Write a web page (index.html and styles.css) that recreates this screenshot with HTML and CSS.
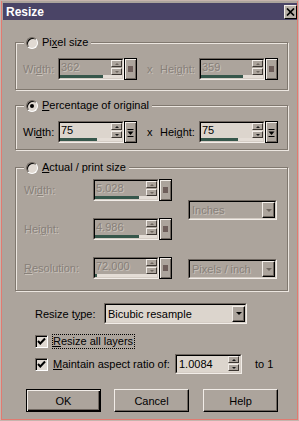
FILE: index.html
```html
<!DOCTYPE html>
<html lang="en">
<head>
    <meta charset="UTF-8">
    <title>Resize</title>
    <link rel="stylesheet" href="styles.css">
</head>
<body>
    <div class="window">
        <div class="titlebar">
            <span class="title">Resize</span>
            <span class="close">
                <svg width="9" height="8" viewBox="0 0 9 8"><path d="M1 0.5 L8 7.5 M8 0.5 L1 7.5" stroke="#000" stroke-width="1.7"/></svg>
            </span>
        </div>
        <div class="content">
            <div class="group g1">
                <div class="legend"><span class="radio"></span><span>Pi<u>x</u>el size</span></div>
                <div class="row">
                    <span class="lbl dis">Wi<u>d</u>th:</span>
                    <div class="combo dis">
                        <div class="edit"><div class="edit-in">
                            <div class="edit-top"><span class="val">362</span><span class="spin"><i class="up"></i><i class="down"></i></span></div>
                            <div class="bar"><div class="fill" style="width:69%"></div></div>
                        </div></div>
                        <span class="pick"><b class="sq"></b></span>
                    </div>
                    <span class="times dis">x</span>
                    <span class="lbl-h dis">Hei<u>g</u>ht:</span>
                    <div class="combo dis">
                        <div class="edit"><div class="edit-in">
                            <div class="edit-top"><span class="val">359</span><span class="spin"><i class="up"></i><i class="down"></i></span></div>
                            <div class="bar"><div class="fill" style="width:68%"></div></div>
                        </div></div>
                        <span class="pick"><b class="sq"></b></span>
                    </div>
                </div>
            </div>

            <div class="group g2">
                <div class="legend"><span class="radio on"></span><span><u>P</u>ercentage of original</span></div>
                <div class="row">
                    <span class="lbl">Wi<u>d</u>th:</span>
                    <div class="combo">
                        <div class="edit"><div class="edit-in">
                            <div class="edit-top"><span class="val">75</span><span class="spin"><i class="up"></i><i class="down"></i></span></div>
                            <div class="bar"><div class="fill" style="width:60%"></div></div>
                        </div></div>
                        <span class="pick">
                            <svg width="7" height="9" viewBox="0 0 7 9"><path d="M0.5 1.5 H6.5" stroke="#000"/><path d="M0.5 3.5 H6.5 L3.5 7 Z" fill="#000"/><path d="M0.5 8.5 H6.5" stroke="#000"/></svg>
                        </span>
                    </div>
                    <span class="times">x</span>
                    <span class="lbl-h">Hei<u>g</u>ht:</span>
                    <div class="combo">
                        <div class="edit"><div class="edit-in">
                            <div class="edit-top"><span class="val">75</span><span class="spin"><i class="up"></i><i class="down"></i></span></div>
                            <div class="bar"><div class="fill" style="width:60%"></div></div>
                        </div></div>
                        <span class="pick">
                            <svg width="7" height="9" viewBox="0 0 7 9"><path d="M0.5 1.5 H6.5" stroke="#000"/><path d="M0.5 3.5 H6.5 L3.5 7 Z" fill="#000"/><path d="M0.5 8.5 H6.5" stroke="#000"/></svg>
                        </span>
                    </div>
                </div>
            </div>

            <div class="group g3">
                <div class="legend"><span class="radio"></span><span><u>A</u>ctual / print size</span></div>
                <div class="print">
                    <div class="print-left">
                        <div class="row">
                            <span class="lbl-wide dis">Wi<u>d</u>th:</span>
                            <div class="combo dis">
                                <div class="edit"><div class="edit-in">
                                    <div class="edit-top"><span class="val">5.028</span><span class="spin"><i class="up"></i><i class="down"></i></span></div>
                                    <div class="bar"><div class="fill" style="width:71%"></div></div>
                                </div></div>
                                <span class="pick"><b class="sq"></b></span>
                            </div>
                        </div>
                        <div class="row">
                            <span class="lbl-wide dis">Hei<u>g</u>ht:</span>
                            <div class="combo dis">
                                <div class="edit"><div class="edit-in">
                                    <div class="edit-top"><span class="val">4.986</span><span class="spin"><i class="up"></i><i class="down"></i></span></div>
                                    <div class="bar"><div class="fill" style="width:71%"></div></div>
                                </div></div>
                                <span class="pick"><b class="sq"></b></span>
                            </div>
                        </div>
                        <div class="row">
                            <span class="lbl-wide dis"><u>R</u>esolution:</span>
                            <div class="combo dis">
                                <div class="edit"><div class="edit-in">
                                    <div class="edit-top"><span class="val">72.000</span><span class="spin"><i class="up"></i><i class="down"></i></span></div>
                                    <div class="bar"><div class="fill" style="width:3%"></div></div>
                                </div></div>
                                <span class="pick"><b class="sq"></b></span>
                            </div>
                        </div>
                    </div>
                    <div class="print-right">
                        <div class="drop drop-units dis"><div class="drop-in"><span class="drop-text">Inches</span><span class="drop-btn"><i class="tri"></i></span></div></div>
                        <div class="drop drop-units drop-res dis"><div class="drop-in"><span class="drop-text">Pixels / inch</span><span class="drop-btn"><i class="tri"></i></span></div></div>
                    </div>
                </div>
            </div>

            <div class="type-row">
                <span class="type-lbl">Resize t<u>y</u>pe:</span>
                <div class="drop drop-type"><div class="drop-in"><span class="drop-text">Bicubic resample</span><span class="drop-btn"><i class="tri"></i></span></div></div>
            </div>

            <div class="check-row">
                <span class="check"><svg width="11" height="11" viewBox="0 0 11 11"><path d="M2 5 L4.3 7.5 L9 2.5" fill="none" stroke="#000" stroke-width="2"/></svg></span>
                <span class="focus"><u>R</u>esize all layers</span>
            </div>

            <div class="check-row aspect-row">
                <span class="check"><svg width="11" height="11" viewBox="0 0 11 11"><path d="M2 5 L4.3 7.5 L9 2.5" fill="none" stroke="#000" stroke-width="2"/></svg></span>
                <span class="aspect-lbl"><u>M</u>aintain aspect ratio of:</span>
                <div class="edit edit-aspect"><div class="edit-in">
                    <div class="edit-top"><span class="val">1.0084</span><span class="spin"><i class="up"></i><i class="down"></i></span></div>
                </div></div>
                <span class="to-one">to 1</span>
            </div>

            <div class="buttons">
                <button class="btn default">OK</button>
                <button class="btn btn-cancel">Cancel</button>
                <button class="btn btn-help">Help</button>
            </div>
        </div>
    </div>
</body>
</html>
```

FILE: styles.css
```css
body {
    margin: 0;
    font-family: "Liberation Sans", Arial, sans-serif;
    font-size: 11px;
    color: #000000;
}
u {
    text-decoration-thickness: 1px;
    text-underline-offset: 1px;
}
.window {
    width: 299px;
    height: 421px;
    box-sizing: border-box;
    background: #aca49c;
    border: 1px solid #c6b4ad;
    box-shadow: inset 1px 0 0 #e27a70, inset -1px 0 0 #e27a70, inset 0 -1px 0 #e27a70;
    padding: 2px 1px 0 2px;
}
.titlebar {
    height: 17px;
    background: #4a4466;
    display: flex;
    align-items: center;
    justify-content: space-between;
    padding-left: 3px;
}
.title {
    color: #ffffff;
    font-weight: bold;
    font-size: 12px;
    line-height: 14px;
}
.close {
    width: 13px;
    height: 14px;
    box-sizing: border-box;
    background: #b8b0a8;
    border: 1px solid;
    border-color: #f2ede8 #000000 #000000 #f2ede8;
    display: flex;
    align-items: center;
    justify-content: center;
}
.content {
    padding: 0 9px 0 12px;
}

/* group boxes */
.group {
    position: relative;
    border: 1px solid #80786f;
    box-shadow: 1px 1px 0 #ece6e0, inset 1px 1px 0 #ece6e0;
}
.g1 {
    margin-top: 22px;
    padding: 15px 0 9px 7px;
}
.g2 {
    margin-top: 15px;
    padding: 15px 0 6px 7px;
}
.g3 {
    margin-top: 17px;
    padding: 11px 0 11px 8px;
}
.legend {
    position: absolute;
    top: -7px;
    left: 8px;
    height: 13px;
    padding: 0 3px 0 2px;
    background: #aca49c;
    display: flex;
    align-items: center;
    gap: 4px;
    line-height: 13px;
}
.radio {
    width: 12px;
    height: 12px;
    box-sizing: border-box;
    border-radius: 50%;
    border: 1px solid;
    border-color: #6e665f #ffffff #ffffff #6e665f;
    background: #e0d9d2;
    box-shadow: inset 1px 1px 0 #000000;
    position: relative;
}
.radio.on::after {
    content: '';
    position: absolute;
    left: 3px;
    top: 3px;
    width: 4px;
    height: 4px;
    border-radius: 50%;
    background: #000000;
}

.row {
    display: flex;
    align-items: center;
    height: 22px;
}
.lbl {
    width: 35px;
}
.lbl-h {
    width: 39px;
}
.lbl-wide {
    width: 69px;
}
.times {
    width: 13px;
    margin-left: 10px;
}
.dis {
    color: #878079;
    text-shadow: 1px 1px 0 rgba(226, 220, 214, 0.55);
}

/* edit with slider */
.combo {
    display: flex;
}
.edit {
    width: 66px;
    height: 22px;
    box-sizing: border-box;
    border: 1px solid;
    border-color: #6e665f #f2ede8 #f2ede8 #6e665f;
}
.edit-in {
    height: 100%;
    box-sizing: border-box;
    border: 1px solid;
    border-color: #000000 #d4ccc4 #d4ccc4 #000000;
    background: #dcd5cd;
    display: flex;
    flex-direction: column;
}
.dis .edit-in {
    background: #aca49c;
}
.edit-top {
    flex: 1;
    display: flex;
}
.val {
    flex: 1;
    padding-left: 1px;
    line-height: 15px;
}
.spin {
    width: 11px;
    display: flex;
    flex-direction: column;
    gap: 1px;
}
.spin i {
    height: 7px;
    box-sizing: border-box;
    border: 1px solid;
    border-color: #f2ede8 #3c3631 #3c3631 #f2ede8;
    background: #aca49c;
    display: flex;
    align-items: center;
    justify-content: center;
}
.spin i::after {
    content: '';
    border-left: 2px solid transparent;
    border-right: 2px solid transparent;
}
.spin .up::after {
    border-bottom: 2px solid #1a1a1a;
}
.spin .down::after {
    border-top: 2px solid #1a1a1a;
}
.dis .spin .up::after {
    border-bottom-color: #6e665f;
}
.dis .spin .down::after {
    border-top-color: #6e665f;
}
.bar {
    height: 3px;
    background: #e4ddd6;
}
.fill {
    height: 100%;
    background: #36574b;
}
.pick {
    width: 13px;
    height: 22px;
    box-sizing: border-box;
    border: 1px solid #000000;
    background: #aca49c;
    box-shadow: inset 1px 1px 0 #f2ede8, inset -1px -1px 0 #6e665f;
    display: flex;
    align-items: center;
    justify-content: center;
}
.sq {
    width: 5px;
    height: 6px;
    background: #6e5e5a;
}

/* print size */
.print {
    display: flex;
}
.print-left {
    display: flex;
    flex-direction: column;
    gap: 17px;
}
.print-right {
    margin-left: 16px;
    display: flex;
    flex-direction: column;
}

/* dropdowns */
.drop {
    height: 20px;
    box-sizing: border-box;
    border: 1px solid;
    border-color: #6e665f #f2ede8 #f2ede8 #6e665f;
    display: flex;
}
.drop-in {
    flex: 1;
    border: 1px solid;
    border-color: #000000 #d4ccc4 #d4ccc4 #000000;
    background: #dcd5cd;
    display: flex;
    align-items: center;
}
.dis .drop-in {
    background: #aca49c;
}
.drop-text {
    flex: 1;
    padding-left: 2px;
    line-height: 14px;
}
.drop-btn {
    width: 13px;
    height: 16px;
    box-sizing: border-box;
    border: 1px solid;
    border-color: #f2ede8 #000000 #000000 #f2ede8;
    box-shadow: inset -1px -1px 0 #6e665f;
    background: #aca49c;
    display: flex;
    align-items: center;
    justify-content: center;
}
.tri {
    border-left: 3px solid transparent;
    border-right: 3px solid transparent;
    border-top: 3px solid #000000;
}
.dis .tri {
    border-top-color: #6e665f;
}
.drop-units {
    width: 89px;
    margin-top: 21px;
}
.drop-res {
    margin-top: 39px;
}
.drop-type {
    width: 143px;
    height: 21px;
}

/* bottom part */
.type-row {
    display: flex;
    align-items: center;
    margin-top: 12px;
    padding-left: 20px;
}
.type-lbl {
    width: 69px;
}
.check-row {
    display: flex;
    align-items: center;
    height: 15px;
    margin-top: 10px;
    padding-left: 20px;
}
.check {
    width: 13px;
    height: 13px;
    box-sizing: border-box;
    border: 1px solid;
    border-color: #6e665f #ffffff #ffffff #6e665f;
    background: #e0d9d2;
    box-shadow: inset 1px 1px 0 #000000;
    display: flex;
}
.focus {
    margin-left: 4px;
    border: 1px dotted #000000;
    line-height: 13px;
    padding-right: 1px;
}
.aspect-row {
    height: 20px;
    margin-top: 5px;
}
.aspect-lbl {
    width: 122px;
    margin-left: 5px;
}
.edit-aspect {
    width: 67px;
    height: 20px;
}
.edit-aspect .val {
    padding-left: 2px;
    line-height: 16px;
}
.edit-aspect .spin {
    margin-right: 1px;
}
.to-one {
    margin-left: 13px;
}
.buttons {
    display: flex;
    margin-top: 15px;
    padding-left: 11px;
}
.btn {
    width: 75px;
    height: 23px;
    box-sizing: border-box;
    font-family: "Liberation Sans", Arial, sans-serif;
    font-size: 11px;
    color: #000000;
    background: #aca49c;
    border: 1px solid;
    border-color: #f2ede8 #000000 #000000 #f2ede8;
    box-shadow: inset -1px -1px 0 #6e665f;
    padding: 0;
}
.btn.default {
    border-color: #000000;
    box-shadow: inset 1px 1px 0 #f2ede8, inset -1px -1px 0 #000000, inset -2px -2px 0 #6e665f;
}
.btn-cancel {
    margin-left: 13px;
}
.btn-help {
    margin-left: 14px;
}
```
